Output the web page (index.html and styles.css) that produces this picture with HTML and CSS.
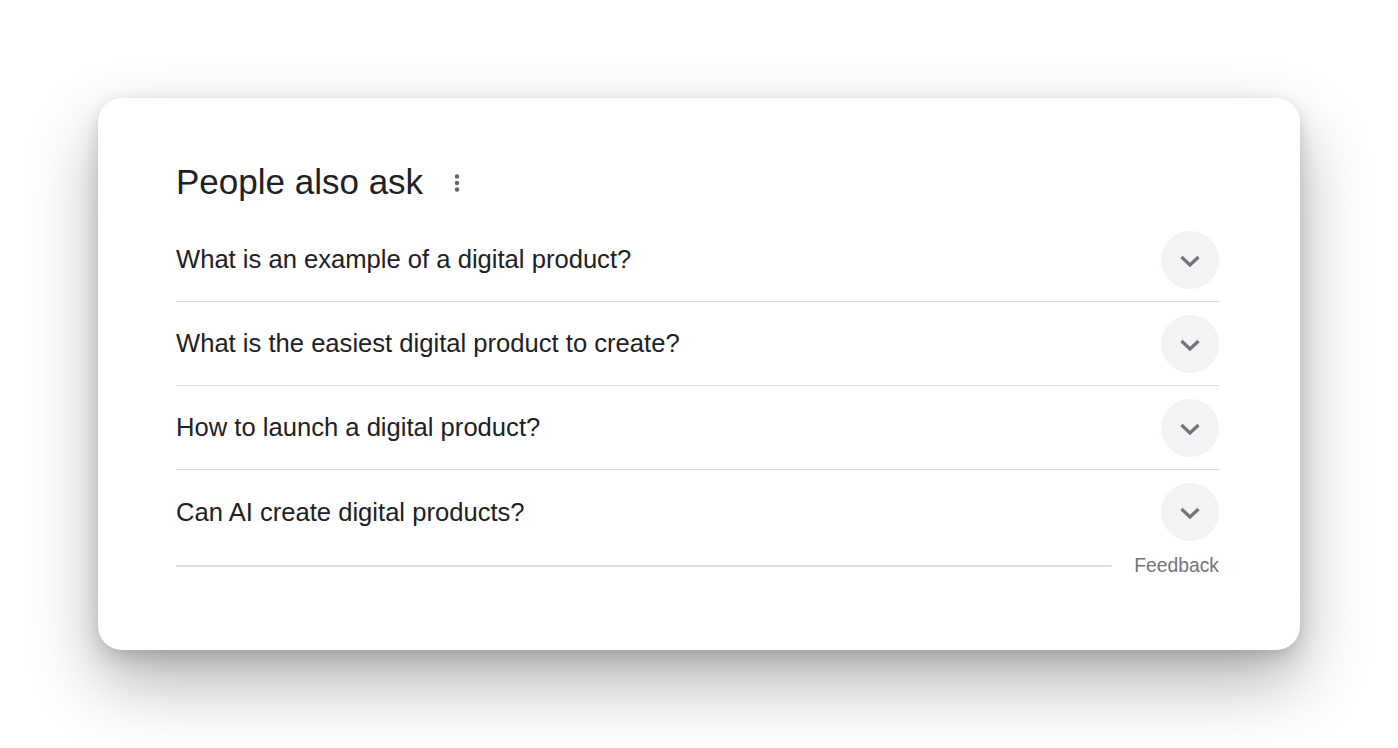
FILE: index.html
```html
<!DOCTYPE html>
<html>
<head>
<meta charset="utf-8">
<link rel="stylesheet" href="styles.css">
</head>
<body>
<div class="stage">
  <div class="card">
    <div class="header">
      <h2 class="title">People also ask</h2>
      <span class="more" aria-label="More options">
        <svg width="6" height="20" viewBox="0 0 6 20"><circle cx="3" cy="3.5" r="2.2" fill="#5f6368"/><circle cx="3" cy="10" r="2.2" fill="#5f6368"/><circle cx="3" cy="16.5" r="2.2" fill="#5f6368"/></svg>
      </span>
    </div>
    <div class="list">
      <div class="row"><span class="q">What is an example of a digital product?</span><span class="btn"><svg width="22" height="14" viewBox="0 0 22 14"><path d="M2.5 3 L11 11 L19.5 3" fill="none" stroke="#70757a" stroke-width="3.2"/></svg></span></div>
      <div class="row"><span class="q">What is the easiest digital product to create?</span><span class="btn"><svg width="22" height="14" viewBox="0 0 22 14"><path d="M2.5 3 L11 11 L19.5 3" fill="none" stroke="#70757a" stroke-width="3.2"/></svg></span></div>
      <div class="row"><span class="q">How to launch a digital product?</span><span class="btn"><svg width="22" height="14" viewBox="0 0 22 14"><path d="M2.5 3 L11 11 L19.5 3" fill="none" stroke="#70757a" stroke-width="3.2"/></svg></span></div>
      <div class="row last"><span class="q">Can AI create digital products?</span><span class="btn"><svg width="22" height="14" viewBox="0 0 22 14"><path d="M2.5 3 L11 11 L19.5 3" fill="none" stroke="#70757a" stroke-width="3.2"/></svg></span></div>
    </div>
    <div class="footer">
      <div class="rule"></div>
      <span class="feedback">Feedback</span>
    </div>
  </div>
</div>
</body>
</html>
```

FILE: styles.css
```css
html, body {
  margin: 0;
  padding: 0;
  background: #ffffff;
}
body {
  min-height: 748px;
  font-family: "Liberation Sans", Arial, sans-serif;
  color: #202124;
}
.stage {
  padding: 98px 98px 98px 98px;
}
.card {
  width: 1202px;
  height: 552px;
  box-sizing: border-box;
  background: #fff;
  border-radius: 24px;
  box-shadow: 0 32px 70px rgba(0,0,0,0.30), 0 10px 20px rgba(0,0,0,0.12), 0 0 14px rgba(0,0,0,0.05);
  padding: 64px 81px 0 78px;
}
.header {
  display: flex;
  align-items: center;
  height: 40px;
}
.title {
  margin: 0;
  font-weight: 400;
  font-size: 35px;
  line-height: 40px;
  color: #202124;
}
.more {
  display: flex;
  margin-left: 31px;
  margin-top: 2px;
}
.list {
  margin-top: 16px;
}
.row {
  display: flex;
  align-items: center;
  justify-content: space-between;
  height: 84px;
  border-bottom: 1px solid #dadce0;
  box-sizing: border-box;
}
.row.last {
  border-bottom: none;
}
.q {
  font-size: 25.6px;
  color: #202124;
}
.btn {
  width: 58px;
  height: 58px;
  border-radius: 50%;
  background: #f1f3f4;
  display: flex;
  align-items: center;
  justify-content: center;
}
.btn svg {
  margin-top: 2px;
}
.footer {
  display: flex;
  align-items: center;
  height: 24px;
}
.rule {
  flex: 1;
  height: 2px;
  background: #dadce0;
  margin-right: 22px;
}
.feedback {
  font-size: 19.3px;
  color: #70757a;
}
```
